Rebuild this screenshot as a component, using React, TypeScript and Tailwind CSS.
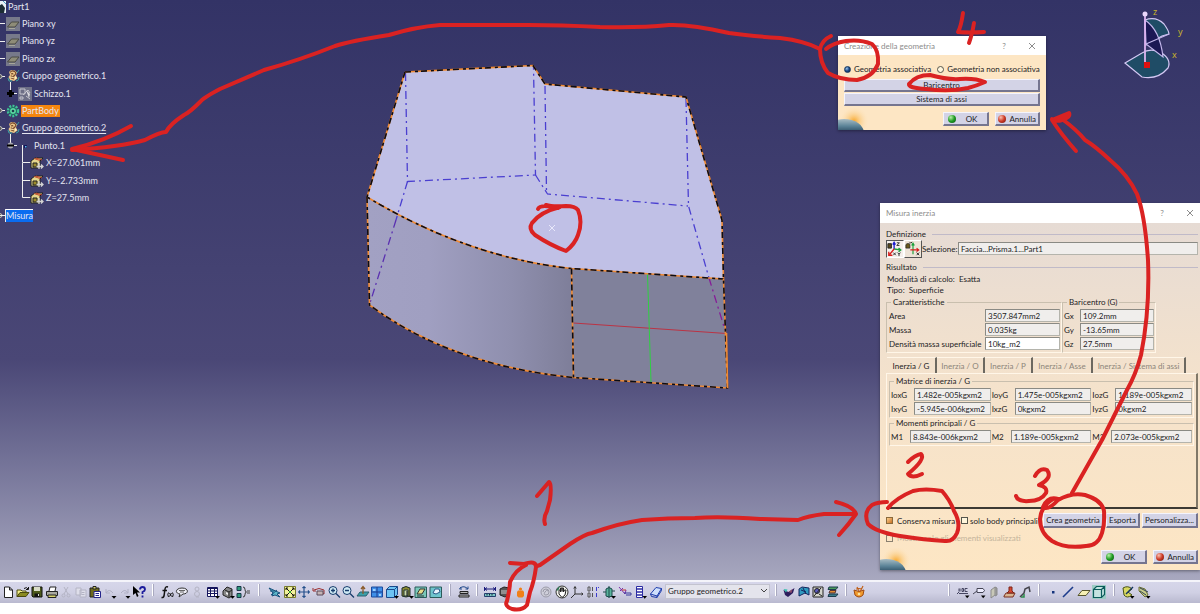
import React, { useId, useState } from "react";

/* ---------- toolbar glyphs, all on a 14 × 14 grid ---------- */

const glyphs: Record<string, React.ReactNode> = {
  new: <path d="M3.500 2h5l3 3v7.500h-8zM8.500 2v3h3" fill="#fff" stroke="#222" />,
  open: (
    <g stroke="#4a4a10">
      <path d="M1 11.500V5h4l1 1h4v2" fill="#f4f08a" />
      <path d="M1 11.500l3-4h9l-3 4z" fill="#8a8a20" />
      <path d="M8 3.500q3-2 4 .5m.5-2v2.500h-2.500" fill="none" stroke="#111" />
    </g>
  ),
  save: (
    <g>
      <path d="M2 2h10v10H3l-1-1z" fill="#4d5a1c" stroke="#111" />
      <path d="M4 2h6v4H4z" fill="#d9dcc8" />
      <path d="M4.500 8.500h5V12h-5z" fill="#111" />
      <path d="M8 9h1v2H8z" fill="#ddd" />
    </g>
  ),
  print: (
    <g stroke="#222">
      <path d="M4 6l1-4h6l-1 4" fill="#fff" />
      <path d="M1.500 6.500h11v4h-11z" fill="#a9a9a0" />
      <path d="M3 10h8v2.500H3z" fill="#d8d36b" />
    </g>
  ),
  cut: (
    <g stroke="#b4b4c4" fill="none">
      <path d="M5 2l4 7M9 2L5 9" />
      <circle cx="4.500" cy="10.500" r="1.500" />
      <circle cx="9.500" cy="10.500" r="1.500" />
    </g>
  ),
  copy: (
    <g stroke="#b4b4c4" fill="#dedeea">
      <path d="M2 3h5v7H2zM6 5h6v7H6z" />
      <path d="M7.500 7.500h3M7.500 9.500h3" />
    </g>
  ),
  paste: (
    <g>
      <path d="M2 3h9v9H2z" fill="#6d6a1c" stroke="#222" />
      <path d="M5 1.500h3v2.500H5z" fill="#d8d36b" stroke="#222" />
      <path d="M6 6.500h6.500v6H6z" fill="#fff" stroke="#24248a" />
      <path d="M7.500 8.500h3.500M7.500 10.500h3.500" stroke="#24248a" />
    </g>
  ),
  undo: (
    <g>
      <path d="M3 8q3-5 7 0M3 4v4h4" fill="none" stroke="#b0b0c4" />
      <path d="M8.500 11h5L11 13.800z" fill="#000" />
    </g>
  ),
  redo: (
    <g>
      <path d="M11 8q-3-5-7 0M11 4v4H7" fill="none" stroke="#b0b0c4" />
      <path d="M8.500 11h5L11 13.800z" fill="#000" />
    </g>
  ),
  help: (
    <g>
      <path d="M1 1v9l2.500-2 1.500 4 1.500-1-1.500-3.500H8z" fill="#000" />
      <path d="M8 4.500Q8 2 10.500 2T13 4.500Q13 6 10.500 7v2M10.500 10.500v2" fill="none" stroke="#1c1c9c" strokeWidth="1.800" />
    </g>
  ),
  formula: (
    <g fill="none" stroke="#111">
      <path d="M8 2Q5.500 1 5 4L4 11q-.5 2-2.500 1.500M2.500 5.500h4.500" strokeWidth="1.500" />
      <path d="M8.500 7.500q-1.500 2 0 4.500M9.500 8l2 3.500m0-3.500l-2 3.500M12.500 7.500q1.500 2 0 4.500" />
    </g>
  ),
  comment: (
    <g>
      <path d="M7 3c7 0 7 6 1 6l-4 3 1-3C-1 8 1 3 7 3z" fill="#ececf4" stroke="#333" />
      <path d="M4 5.500h6M5 7h4" stroke="#666" />
    </g>
  ),
  lock: (
    <g stroke="#b4b4c4" fill="none">
      <circle cx="7" cy="4" r="2" />
      <circle cx="7" cy="9" r="2.500" />
      <path d="M6 12h3" />
    </g>
  ),
  table: (
    <g>
      <path d="M1.500 2.500h10v9h-10z" fill="#fff" stroke="#14145c" />
      <path d="M1 3.500h11M2 6h9M2 8.500h9M4.500 4v7M8.500 4v7" stroke="#14145c" />
      <path d="M9 11h5l-2.500 2.800z" fill="#000" />
    </g>
  ),
  catalog: (
    <g>
      <path d="M2 6l4-4 5 2v7l-3 2-6-3z" fill="#888" stroke="#222" />
      <path d="M4 5l4 2v5M8 7l3-2" stroke="#222" fill="none" />
      <path d="M5 7l2 1v2l-2-1z" fill="#eee" />
      <path d="M9 11h5l-2.500 2.800z" fill="#000" />
    </g>
  ),
  tree: (
    <g>
      <path d="M1 1.500h4v4H1zM1 8.500h4v4H1z" fill="#2f9a7a" stroke="#17364a" />
      <path d="M7 2q2 0 2 2.500T10.500 7Q9 7 9 9.500T7 12" fill="none" stroke="#333" />
      <path d="M11 6h3M11 8h3" stroke="#444" />
    </g>
  ),
  fly: (
    <g stroke="#17507c">
      <path d="M1 3l11 5-3 1 3 3-5-2-3 1 1-3z" fill="#5cb6c8" />
      <path d="M3 10l6-5M2 6h4" />
    </g>
  ),
  fit: (
    <g>
      <path d="M1.500 1.500h11v11h-11z" fill="#f3f29a" stroke="#777a2a" />
      <path d="M3 3l3 3M11 3L8 6M3 11l3-3M11 11L8 8M3 5V3h2M9 3h2v2M3 9v2h2M9 11h2V9" stroke="#111" fill="none" />
      <path d="M6 6h2v2H6z" fill="#2fa02f" />
    </g>
  ),
  pan: (
    <g stroke="#26508c" fill="#26508c">
      <path d="M7 2v10M2 7h10" strokeWidth="1.200" />
      <path d="M7 1l2 2H5zM7 13l2-2H5zM1 7l2-2v4zM13 7l-2-2v4z" strokeWidth=".3" />
    </g>
  ),
  rotate: (
    <g fill="none" stroke="#9a2f2f">
      <path d="M2 5q5-3 10 0v4q-2-2-5-1" />
      <path d="M1 3v3h3" />
      <path d="M5 6h6v4H5z" fill="#c4b4b4" stroke="#5a4a5a" />
    </g>
  ),
  zoomIn: (
    <g>
      <circle cx="6" cy="5.500" r="4" fill="#cfeaf4" stroke="#173c6c" />
      <path d="M4 5.500h4M6 3.500v4M9 8.500l4 4" stroke="#173c6c" strokeWidth="1.300" />
    </g>
  ),
  zoomOut: (
    <g>
      <circle cx="6" cy="5.500" r="4" fill="#cfeaf4" stroke="#173c6c" />
      <path d="M4 5.500h4M9 8.500l4 4" stroke="#173c6c" strokeWidth="1.300" />
    </g>
  ),
  normal: (
    <g>
      <path d="M1 11l3-4h9l-3 4z" fill="#3ca0a8" stroke="#2b6070" />
      <path d="M7 9V2M5 4l2-2.500L9 4" stroke="#8a5a2a" fill="none" strokeWidth="1.300" />
    </g>
  ),
  multi: (
    <g>
      <path d="M1.500 2h11v10h-11z" fill="#3f8fe8" stroke="#1b4a9c" />
      <path d="M7 2v10M2 7h10" stroke="#1b3a8c" />
      <path d="M3 4h2.500v2H3zM9 9h2v2H9z" fill="#9ed0ff" />
    </g>
  ),
  iso: (
    <g>
      <path d="M1.500 4.500l3-3h8v8l-3 3h-8z" fill="#6ec4f4" stroke="#1a4a8c" />
      <path d="M1.500 4.500h8v8M9.500 4.500l3-3" fill="none" stroke="#1a4a8c" />
      <path d="M9 11h5l-2.500 2.800z" fill="#000" />
    </g>
  ),
  shade: (
    <g>
      <path d="M2 3q4-3 8 0v8q-4 2-8 0z" fill="#8a8a30" stroke="#1c2c2c" />
      <path d="M4 5h4v6H4z" fill="#c8d8a8" stroke="#233" />
      <path d="M7 6v5" stroke="#111" />
      <path d="M9 11h5l-2.500 2.800z" fill="#000" />
    </g>
  ),
  hideShow: (
    <g>
      <path d="M1 2h11.500v10.500H1z" fill="#79c8b8" stroke="#2a5a5a" />
      <path d="M3 9l3-5h5l-3 5z" fill="#e4dc8a" stroke="#333" />
      <path d="M3 11h7" stroke="#333" />
    </g>
  ),
  swap: (
    <g>
      <path d="M1 2h11.500v10.500H1z" fill="#6ec4cc" stroke="#2a5a5a" />
      <path d="M4 8l2-4h4l1 3-4 2z" fill="#e8f4fc" stroke="#2a5a8a" />
    </g>
  ),
  apply: (
    <g stroke="#222">
      <path d="M3 6.500h8v2H3zM2 10h10v2H2z" fill="#bbb" />
      <path d="M3 3q4-3 8 1M11 1.500V4H8.500M4 2l-1.500 2H5" fill="none" stroke="#224a8c" />
    </g>
  ),
  measure: (
    <g>
      <path d="M1.500 2v4M12.500 2v4M2 4h10M4 2.500L2 4l2 1.500M10 2.500L12 4l-2 1.500" fill="none" stroke="#1c1c7c" />
      <path d="M1.500 8.500h11v3h-11z" fill="#7cc8c8" stroke="#24406c" />
      <path d="M4 9v1.500M6.500 9v1.500M9 9v1.500" stroke="#123" />
    </g>
  ),
  item: (
    <g stroke="#222">
      <path d="M2 4l4-2 5 1v7l-4 2-5-2z" fill="#555" />
      <path d="M3 6h7M3 8h7" stroke="#ccc" />
    </g>
  ),
  inertia: (
    <g>
      <path d="M5 5.500h5l1 1.500v4l-1.500 1.500h-4L4 11V7z" fill="#f08018" />
      <circle cx="7.500" cy="4" r="1.600" fill="#f08018" />
    </g>
  ),
  update: (
    <g fill="none" stroke="#9a9aa8">
      <circle cx="7" cy="7" r="5" fill="#cfcfda" />
      <path d="M4 7q0-3 3-3t3 3-3 3-1-3 3-1" />
    </g>
  ),
  hand: (
    <g>
      <circle cx="7" cy="7" r="6" fill="#f4f4ee" stroke="#333" />
      <path d="M4 9V5h1.500v2-4H7v3.500V3h1.500v4l1-2h1.500l-1 5-3 2.500z" fill="#fff" stroke="#222" />
      <path d="M1.500 6Q2 2 5 1.500L3.500 5z" fill="#2f7a5a" />
    </g>
  ),
  axis: (
    <g fill="none" stroke="#333">
      <path d="M5 2v7h8M5 9l-4 4M3.800 3.500L5 1.500l1.200 2M11.500 7.800L13 9l-1.500 1.200" />
    </g>
  ),
  binary: (
    <g fill="none" stroke="#555">
      <path d="M2 2h2v4H2zM2 8h2v4H2zM6.500 2v4M6.500 8v4" />
      <path d="M10.500 2v4M10.500 8v4M12.500 2v1" stroke="#3a3acc" />
    </g>
  ),
  body: (
    <g>
      <path d="M4 4q3-3 6 0v7q-3 2-6 0z" fill="#58b49c" stroke="#1c4a4a" />
      <path d="M1 7h3M10 6h3M7 1v12" stroke="#1c4a4a" />
      <path d="M9 11h5l-2.500 2.800z" fill="#000" />
    </g>
  ),
  relation: (
    <g fill="none">
      <path d="M1 2l6 7 1-4M2 6l3-3" stroke="#7a2fa8" />
      <path d="M6 8h7v2H8" stroke="#3a3a9c" />
      <path d="M4 5h4" stroke="#c03030" />
    </g>
  ),
  stack: (
    <g>
      <path d="M3.500 1.500h6v11h-6z" fill="#fff" stroke="#2c2ca4" />
      <path d="M4 4h5M4 7h5M4 10h5" stroke="#2c2ca4" strokeWidth="1.500" />
      <path d="M9.500 11h4.500l-2.300 2.800z" fill="#000" />
    </g>
  ),
  eraser: (
    <g stroke="#1c3cac">
      <path d="M1.500 9L7 2.500l5.500 1L8 11z" fill="#cfe0fc" />
      <path d="M1.500 9l1 2.500 5.500 1 4.500-7v-2M8 11v1.500" fill="none" />
    </g>
  ),
  render1: (
    <g>
      <path d="M1.500 5l5 2 6-4-1.500 5-5 4-3-2z" fill="#2c1c5c" />
      <path d="M1.500 4l4 .5L4 7.500z" fill="#3cc0b0" />
      <path d="M6.500 7l4-3-1 4z" fill="#8a4a6a" />
    </g>
  ),
  render2: (
    <g>
      <path d="M2 4l3-2 7 1v7l-4-2-6 3z" fill="#2f9ac0" stroke="#14245c" />
      <path d="M4 5l5 2M6 3l3 6" stroke="#14245c" />
    </g>
  ),
  render3: (
    <g>
      <path d="M2 2h10v10H2z" fill="#d4d4cc" stroke="#222" />
      <circle cx="6" cy="6" r="2.500" fill="#5a5ac0" stroke="#222" />
      <path d="M3 11l7-8M8 9l3 2" stroke="#222" />
    </g>
  ),
  render4: (
    <g>
      <path d="M3 2h9l-2 2.500H2z" fill="#4c9c5c" stroke="#1c3c4c" />
      <path d="M4 5.500h6L9 8H3z" fill="#e08a30" stroke="#533" />
      <path d="M3 9h9l-2 2.500H2z" fill="#3c7c8c" stroke="#1c3c4c" />
    </g>
  ),
  palette: (
    <g>
      <path d="M2 5q5 3 10 0l-1 5q-4 4-8 0z" fill="#f09a2c" stroke="#a04a10" />
      <path d="M5 2l2 4M11 1L8 7M4 4q3-1 6 0" stroke="#c06018" fill="none" strokeWidth="1.200" />
      <circle cx="7" cy="9" r="1.300" fill="#fbe2a0" />
    </g>
  ),
  textNote: (
    <g>
      <path d="M3 3.500v3m1-3v3M6 3.500h1.500v3H6zM9 3.500h2.500M9 6.500h2.500M9 3.500v3M3 8.500h9M1 9l2-2" fill="none" stroke="#444460" />
      <path d="M9 10.500h4.500l-2.300 2.800z" fill="#000" />
    </g>
  ),
  flag: (
    <g>
      <path d="M5 3.500h6l1.500 2-1.500 2H5z" fill="#eef" stroke="#445" />
      <path d="M5 6l-4 3" stroke="#445" />
      <path d="M9 10.500h4.500l-2.300 2.800z" fill="#000" />
    </g>
  ),
  plate: (
    <g>
      <path d="M4 5l4-3v8l-4 3z" fill="#c8c8b8" stroke="#8a8a8a" />
      <path d="M8 2l2 1v7l-2 1" fill="#999" stroke="#8a8a8a" />
    </g>
  ),
  stamp: (
    <g>
      <path d="M1 11l2-3h9l-2 4H1z" fill="#d8b490" stroke="#7a3020" />
      <path d="M6 2h3v4l2 2H4l2-2z" fill="#d84830" stroke="#7a2418" />
    </g>
  ),
  robot: (
    <g fill="none" stroke="#44444c" strokeWidth="1.500">
      <path d="M2 12l4-4 1-4 4-2 1 5" />
      <path d="M3 12h3V9" stroke="#2c8c4c" />
    </g>
  ),
  point: <path d="M6 6h2.500v2.500H6z" fill="#14347c" />,
  line: <path d="M2 12L12 2" stroke="#1c3c8c" strokeWidth="1.600" />,
  plane: <path d="M1 10.500l4-5h8l-4 5z" fill="#f6f0b4" stroke="#55552c" />,
  cube: (
    <g>
      <path d="M0 0h14v14H0z" fill="#9cccc4" />
      <path d="M1.500 4.500l3-3h8v8l-3 3h-8zM1.500 4.500h8v8M9.500 4.500l3-3" fill="#c4e4e0" stroke="#0c5c5c" strokeWidth="1.200" />
    </g>
  ),
  sketch: (
    <g>
      <path d="M2 3q5-3 9 1l-4 3 4 3q-5 4-8 0z" fill="#d8d860" stroke="#445014" />
      <path d="M5 9l7-7" stroke="#14345c" strokeWidth="1.500" />
      <path d="M9 11h4.500l-2.300 2.800z" fill="#000" />
    </g>
  ),
  sketch2: (
    <g>
      <path d="M2 2l6 2 3 6-3 2-6-6z" fill="#c8cc8a" stroke="#6a7034" />
      <path d="M3 3l8 4M3 6l6 4" stroke="#345" />
      <path d="M9 11h4.500l-2.300 2.800z" fill="#000" />
    </g>
  ),
};

function Tool({ name, label }: { name: string; label: string }) {
  return (
    <button type="button" aria-label={label} className="size-3.5 shrink-0">
      <svg viewBox="0 0 14 14" className="size-3.5">
        {glyphs[name]}
      </svg>
    </button>
  );
}

function Grip() {
  return <span className="mb-1 h-3 w-0.5 shrink-0 border-l border-white bg-[#a9a9bf]" />;
}

function Group({ tools, className }: { tools: [string, string][]; className: string }) {
  return (
    <div className={"flex shrink-0 items-center justify-between " + className}>
      {tools.map(([name, label]) => (
        <Tool key={name} name={name} label={label} />
      ))}
    </div>
  );
}

function Toolbar() {
  return (
    <footer className="flex h-[23px] items-center overflow-hidden border-t-2 border-[#f4f4fa] bg-linear-to-b from-[#d6d6ea] via-[#d0d0e4] to-[#b9b9cf] pb-0.5 pl-px">
      <Group
        className="w-[145px]"
        tools={[
          ["new", "Nuovo"],
          ["open", "Apri"],
          ["save", "Salva"],
          ["print", "Stampa"],
          ["cut", "Taglia"],
          ["copy", "Copia"],
          ["paste", "Incolla"],
          ["undo", "Annulla azione"],
          ["redo", "Ripeti"],
          ["help", "Guida"],
        ]}
      />
      <div className="flex w-[14px] shrink-0 justify-center"><Grip /></div>
      <Group
        className="w-[90px]"
        tools={[
          ["formula", "Formula"],
          ["comment", "Commento"],
          ["lock", "Blocca"],
          ["table", "Tabella"],
          ["catalog", "Catalogo"],
          ["tree", "Struttura"],
        ]}
      />
      <div className="flex w-[18px] shrink-0 justify-center"><Grip /></div>
      <Group
        className="w-[175px]"
        tools={[
          ["fly", "Vola"],
          ["fit", "Adatta tutto"],
          ["pan", "Sposta"],
          ["rotate", "Ruota"],
          ["zoomIn", "Ingrandisci"],
          ["zoomOut", "Riduci"],
          ["normal", "Vista normale"],
          ["multi", "Viste multiple"],
          ["iso", "Isometrica"],
          ["shade", "Ombreggiatura"],
          ["hideShow", "Nascondi/Mostra"],
          ["swap", "Scambia spazio"],
        ]}
      />
      <div className="flex w-[14px] shrink-0 justify-center"><Grip /></div>
      <Tool name="apply" label="Applica materiale" />
      <div className="flex w-[12px] shrink-0 justify-center"><Grip /></div>
      <Group
        className="w-11"
        tools={[
          ["measure", "Misura tra"],
          ["item", "Misura elemento"],
          ["inertia", "Misura inerzia"],
        ]}
      />
      <Group
        className="ml-3 w-[124px]"
        tools={[
          ["update", "Aggiorna"],
          ["hand", "Aggiornamento manuale"],
          ["axis", "Sistema di assi"],
          ["binary", "Dimensioni medie"],
          ["body", "Corpo"],
          ["relation", "Relazioni"],
          ["stack", "Selezione"],
          ["eraser", "Crea riferimento"],
        ]}
      />
      <div className="relative ml-0.5 w-[105px] shrink-0">
        <select
          aria-label="Oggetto di lavoro"
          className="block h-[15px] w-full appearance-none border border-[#c3c3cf] bg-[#e4e4ec] pl-0.5 font-['Lato',sans-serif] text-[8px] leading-[13px] text-[#1c1c24]"
        >
          <option>Gruppo geometrico.2</option>
        </select>
        <svg viewBox="0 0 8 6" className="pointer-events-none absolute top-1 right-0.5 h-1.5 w-2">
          <path d="M1 1l3 3 3-3" fill="none" stroke="#444" />
        </svg>
      </div>
      <div className="flex w-[12px] shrink-0 justify-center"><Grip /></div>
      <Group
        className="w-[58px]"
        tools={[
          ["render1", "Sformo"],
          ["render2", "Curvatura"],
          ["render3", "Analisi"],
          ["render4", "Strati"],
        ]}
      />
      <div className="flex w-[12px] shrink-0 justify-center"><Grip /></div>
      <Tool name="palette" label="Materiale" />
      <div className="ml-[82px] flex w-[8px] shrink-0"><Grip /></div>
      <Group
        className="w-[76px]"
        tools={[
          ["textNote", "Testo"],
          ["flag", "Nota"],
          ["plate", "Piastra"],
          ["stamp", "Timbro"],
          ["robot", "Vincolo"],
        ]}
      />
      <div className="flex w-[14px] shrink-0 justify-center"><Grip /></div>
      <Group
        className="w-[60px]"
        tools={[
          ["point", "Punto"],
          ["line", "Linea"],
          ["plane", "Piano"],
          ["cube", "Solido"],
        ]}
      />
      <div className="flex w-[15px] shrink-0 justify-center"><Grip /></div>
      <Group
        className="w-[30px]"
        tools={[
          ["sketch", "Schizzo"],
          ["sketch2", "Schizzo posizionato"],
        ]}
      />
    </footer>
  );
}

/* ---------- specification tree ---------- */

const planeIcon = (
  <g>
    <path d="M0 0h14v14H0z" fill="#77798a" />
    <path d="M1.500 10l4-5h7.500l-4 5z" fill="#8e8c78" stroke="#4a4a44" />
    <path d="M3 11.500h6" stroke="#a6a69a" />
  </g>
);
const setIcon = (
  <g>
    <path d="M3 3l2-2 4 .5 2 2-1 3 1.500 3-1.500 1L8 12l-4-1-1.500-3L4 6z" fill="#ecc88a" />
    <path d="M4 3.500q2-2.500 4.500-1t0 4-3.500 0M5 5q2-1 2 .5M5 9l3 1" fill="none" stroke="#7a4a2c" strokeWidth="1.100" />
    <path d="M9 7l2 2-2 1zM5 7.500l2 .5-1 1.500z" fill="#fff4c8" />
    <path d="M11 4l2-3M10 12q3 0 3-4M2 9l1 3h3" stroke="#3ca0a0" fill="none" />
  </g>
);
const sketchIcon = (
  <g>
    <path d="M0 0h14v14H0z" fill="#6d6f86" />
    <path d="M2 2h5v5H2zM2 10h3v2H2zM8 9l4 3M5 8l5-5 2 3" fill="none" stroke="#c4c4cc" />
    <path d="M8 3l3 8 1-4z" fill="#dcdce0" />
  </g>
);
const gearIcon = (
  <g>
    <circle cx="7" cy="7" r="5" fill="none" stroke="#3fc496" strokeWidth="2.500" strokeDasharray="2 1.200" />
    <circle cx="7" cy="7" r="3.500" fill="#5fd8a4" stroke="#14745c" />
    <circle cx="7" cy="7" r="1.300" fill="#1c3c4c" />
  </g>
);
const paramIcon = (
  <g>
    <path d="M1 5l4-3h8l-3 3v7H1z" fill="#e4d68c" stroke="#222" />
    <path d="M4 2.500l6 2M6 2l6 2" stroke="#c04a2c" />
    <path d="M3 7h4v4H3z" fill="#9c8c2c" stroke="#222" />
    <path d="M9 7v6M6.500 10.500H13M11 8.500l2 2-2 2" stroke="#d4d4d4" fill="none" strokeWidth="1.300" />
  </g>
);

type Node = { text: string; level: 0 | 1 | 2 | 3; icon?: React.ReactNode; mark?: "open" | "closed" | "node"; style?: string };

const nodes: Node[] = [
  {
    text: "Part1",
    level: 0,
    icon: (
      <g>
        <path d="M5 1h9v12H7z" fill="#e8f0f4" />
        <path d="M5 7l5-3 3 4-1 5H7z" fill="#1c2c34" />
        <path d="M11 1l3 3" stroke="#4a9cc4" />
      </g>
    ),
    style: "ml-0.5",
  },
  { text: "Piano xy", level: 1, icon: planeIcon, style: "ml-0.5" },
  { text: "Piano yz", level: 1, icon: planeIcon, style: "ml-0.5" },
  { text: "Piano zx", level: 1, icon: planeIcon, style: "ml-0.5" },
  { text: "Gruppo geometrico.1", level: 1, icon: setIcon, mark: "node", style: "ml-0.5" },
  { text: "Schizzo.1", level: 2, icon: sketchIcon, mark: "closed", style: "ml-0.5" },
  { text: "PartBody", level: 1, icon: gearIcon, mark: "node", style: "ml-px bg-[#f5860f] px-px" },
  { text: "Gruppo geometrico.2", level: 1, icon: setIcon, mark: "node", style: "ml-0.5 underline underline-offset-2" },
  {
    text: "Punto.1",
    level: 2,
    mark: "open",
    icon: (
      <g>
        <path d="M6 6h3v3H6z" fill="#14145c" />
        <path d="M7 7h1.500v1.500H7z" fill="#5cc0e4" />
      </g>
    ),
    style: "ml-0.5",
  },
  { text: "X=27.061mm", level: 3, icon: paramIcon, style: "ml-0.5" },
  { text: "Y=-2.733mm", level: 3, icon: paramIcon, style: "ml-0.5" },
  { text: "Z=27.5mm", level: 3, icon: paramIcon, style: "ml-0.5" },
  { text: "Misura", level: 0, mark: "node", style: "border-t border-white bg-[#0a6cf0]" },
];

const indents = ["w-1.5", "w-5", "w-8", "w-11"];

function TreeRow({ node }: { node: Node }) {
  const { level, mark } = node;
  return (
    <li className="flex items-center">
      <span className={"relative flex h-full shrink-0 items-center justify-end " + indents[level]}>
        <svg viewBox="0 0 30 17" className="absolute top-0 left-0 h-[17px] w-[30px] overflow-visible" fill="none" stroke="#eee" strokeWidth="1">
          {level === 1 && <path d="M0 8.500h5" />}
          {level === 2 && <path d="M10.500 -3V8.500M13 8.500h4" />}
          {level === 3 && <path d="M22.500 -9V8.500h8" />}
          {mark === "node" && <circle cx="0" cy="8.500" r="2" stroke="#bbb" fill="#555" />}
          {mark === "closed" && <path d="M10.500 5v7M7 8.500h7" stroke="#000" strokeWidth="3" />}
          {mark === "open" && (
            <g>
              <circle cx="10.500" cy="8.500" r="3" fill="#a8a8b0" stroke="none" />
              <path d="M7 8.500h7" stroke="#000" strokeWidth="2" />
            </g>
          )}
          {level === 0 && mark === "node" && <path d="M0 8.500h5M5.500 2v13" />}
        </svg>
        {node.icon && (
          <svg viewBox="0 0 14 14" className="relative size-3.5 shrink-0">
            {node.icon}
          </svg>
        )}
      </span>
      <span className={"leading-3 " + node.style}>
        <a href="#" className="text-[#e4e4f0]">{node.text}</a>
      </span>
    </li>
  );
}

function SpecificationTree() {
  return (
    <nav aria-label="Albero delle specifiche" className="relative overflow-hidden">
      <ul className="-mt-0.5 grid h-[226px] auto-rows-fr text-[9px]">
        {nodes.map((n) => (
          <TreeRow key={n.text} node={n} />
        ))}
      </ul>
    </nav>
  );
}

/* ---------- 3D part ---------- */

function Part() {
  const edges = [
    "M405 72L533 65.500L545 84L686 97L722 220L723.500 279",
    "M405 72L367 197C440 241 510 262 571.500 268.500L723.500 279",
    "M367 197L369.500 305C430 350 500 370 573 377.500L727.500 388L723.500 279",
    "M571.500 268.500L573.500 377.500",
  ];
  return (
    <svg viewBox="0 0 1200 580" className="pointer-events-none absolute top-0 left-0 h-[580px] w-[1200px]" fill="none">
      <defs>
        <linearGradient id="curved" x1="367" x2="573" y1="0" y2="0" gradientUnits="userSpaceOnUse">
          <stop offset="0" stopColor="#a2a1c3" />
          <stop offset=".3" stopColor="#a09fc1" />
          <stop offset=".7" stopColor="#8f8fae" />
          <stop offset="1" stopColor="#7e7e99" />
        </linearGradient>
      </defs>
      <path d="M405 72L533 65.500L545 84L686 97L722 220L723.500 279L571.500 268.500C510 262 440 241 367 197z" fill="#c0c0e6" />
      <path d="M367 197C440 241 510 262 571.500 268.500L573.500 377.500C500 370 430 350 369.500 305z" fill="url(#curved)" />
      <path d="M571.500 268.500L723.500 279L727.500 388L573.500 377.500z" fill="#80819b" />
      <g stroke="#4a3fd0" strokeWidth="1.300" strokeDasharray="8 4 2 4">
        <path d="M405.500 73L407.500 181.500L535.500 175L533.500 67" />
        <path d="M545 86L546.500 192M535.500 175L547.500 194L688 206M686 99L688.500 206L709 278" />
        <path d="M407.500 181.500L396 220" />
      </g>
      <g strokeWidth="1.300" strokeDasharray="8 4 2 4">
        <path d="M396 220L370 303" stroke="#5a30b0" />
        <path d="M709 278L725 330" stroke="#861c98" />
      </g>
      <path d="M573.500 323L726.500 333.500" stroke="#bb3344" />
      <path d="M647.500 274L651 382" stroke="#2fd042" />
      {edges.map((d) => (
        <g key={d} strokeWidth="1.600">
          <path d={d} stroke="#f08a34" />
          <path d={d} stroke="#0c0c14" strokeDasharray="6 4 3 3" />
        </g>
      ))}
      <path d="M726.500 333L727.500 388" stroke="#f08a34" strokeWidth="1.600" />
      <path d="M549 225l6 6m0-6l-6 6" stroke="#e8e8fa" />
    </svg>
  );
}

function Compass() {
  return (
    <svg viewBox="0 0 70 80" className="absolute top-1 right-[10px] h-20 w-[70px]" fill="none">
      <path d="M5 59L22 49Q30 44 40 48Q52 55 48 64Q38 76 22 73z" fill="#1f4c66" stroke="#d4c8f4" strokeWidth="1.200" />
      <path d="M25 16Q36 12 44 20Q49 27 49 30L42 32L26 41z" fill="#1f4c66" stroke="#d4c8f4" strokeWidth="1.200" />
      <path d="M25 16Q40 26 43 53L26 40z" fill="#1c1854" stroke="#c4b8ec" strokeWidth="1.200" />
      <path d="M26 40L49 30" stroke="#c4b8ec" strokeWidth="1.200" />
      <path d="M25 10V60" stroke="#dcb4f0" strokeWidth="1.800" />
      <circle cx="25" cy="10" r="2.500" fill="#ead8fc" />
      <path d="M24 58h6v6h-6z" fill="#e01010" />
      <g fill="#c8b42c" fontFamily="Noto Sans, sans-serif" fontSize="9">
        <text x="33" y="11">z</text>
        <text x="58" y="31">y</text>
        <text x="52" y="54">x</text>
      </g>
    </svg>
  );
}

/* ---------- dialogs ---------- */

function TitleBar({ title, className }: { title: string; className: string }) {
  return (
    <header className={"flex items-center bg-white pl-1.5 text-[#8c8c8c] " + className}>
      <h2 className="flex-1">{title}</h2>
      <button type="button" aria-label="Guida" className="w-6">?</button>
      <button type="button" aria-label="Chiudi" className="ml-1.5 flex w-5 justify-center">
        <svg viewBox="0 0 8 8" className="size-2">
          <path d="M1 1l6 6M7 1L1 7" stroke="#8c8c8c" fill="none" />
        </svg>
      </button>
    </header>
  );
}

const raised =
  "border-t border-l border-r-2 border-b-2 border-t-[#f4f4fc] border-l-[#f4f4fc] border-r-[#75758f] border-b-[#75758f] bg-[#d3d3e6] text-[#1c1c24]";

function ActionButtons() {
  return (
    <div className="flex gap-1.5">
      <button type="button" className={"flex h-3.5 w-[46px] items-center pl-1 leading-none " + raised}>
        <span className="size-2 rounded-full bg-radial-[at_35%_30%] from-[#b8f0a8] via-[#1f9c24] to-[#0c4c10]" />
        <span className="flex-1 text-center">OK</span>
      </button>
      <button type="button" className={"flex h-3.5 w-[45px] items-center justify-between px-0.5 leading-none " + raised}>
        <span className="size-2 rounded-full bg-radial-[at_35%_30%] from-[#fbc0b0] via-[#cc3a26] to-[#6c140c]" />
        <span>Annulla</span>
      </button>
    </div>
  );
}

function Planet() {
  return (
    <svg viewBox="0 0 32 22" className="pointer-events-none absolute bottom-0 left-0 h-[22px] w-8">
      <defs>
        <radialGradient id="glow" cx=".5" cy=".5" r=".5">
          <stop offset="0" stopColor="#f8a82c" />
          <stop offset=".4" stopColor="#fac878" stopOpacity=".7" />
          <stop offset="1" stopColor="#fde6c4" stopOpacity="0" />
        </radialGradient>
        <linearGradient id="globe" x1="0" x2="0" y1="0" y2="1">
          <stop offset="0" stopColor="#a8bcc4" />
          <stop offset=".25" stopColor="#5c8498" />
          <stop offset=".5" stopColor="#24445a" />
          <stop offset="1" stopColor="#14283a" />
        </linearGradient>
      </defs>
      <circle cx="16" cy="13" r="15" fill="url(#glow)" />
      <ellipse cx="6" cy="25" rx="20" ry="14" fill="url(#globe)" />
    </svg>
  );
}

function GeometryDialog() {
  const [kind, setKind] = useState("associativa");
  return (
    <section
      aria-label="Creazione della geometria"
      className="absolute top-9 right-[154px] w-[208px] text-[8px] leading-[10px] text-[#1c1c24] shadow-[0_1px_3px_#00000066]"
    >
      <TitleBar title="Creazione della geometria" className="h-[19px] pr-1" />
      <div className="relative bg-[#fde6c4] px-1.5 pt-2 pb-1">
        <Planet />
        <div className="flex h-[12px] items-center gap-1.5">
          {["associativa", "non associativa"].map((k) => (
            <label key={k} className="flex items-center gap-[3px] whitespace-nowrap">
              <input
                type="radio"
                name="kind"
                checked={kind === k}
                onChange={() => setKind(k)}
                className="size-[7px] shrink-0 appearance-none rounded-full border border-[#55554c] bg-[#fff6dc] checked:border-[#14345c] checked:bg-radial-[at_35%_30%] checked:from-[#9cc4e8] checked:via-[#1c4c8c] checked:to-[#0c1c3c]"
              />
              Geometria {k}
            </label>
          ))}
        </div>
        <div className="mt-1 flex flex-col gap-px">
          <button type="button" className={"h-[13px] leading-none " + raised}>Baricentro</button>
          <button type="button" className={"h-[13px] leading-none " + raised}>Sistema di assi</button>
        </div>
        <div className="mt-1.5 flex justify-end">
          <ActionButtons />
        </div>
      </div>
    </section>
  );
}

function Field({
  label,
  value,
  labelClass,
  white,
}: {
  label: string;
  value: string;
  labelClass: string;
  white?: boolean;
}) {
  const id = useId();
  return (
    <div className="flex min-w-0 flex-1 items-center">
      <label htmlFor={id} className={"shrink-0 whitespace-nowrap " + labelClass}>{label}</label>
      <input
        id={id}
        readOnly={!white}
        defaultValue={value}
        className={
          "h-[13px] w-full min-w-0 border border-t-[#8a8a84] border-r-[#b4b4ac] border-b-[#b4b4ac] border-l-[#8a8a84] px-0.5 leading-[11px] " +
          (white ? "bg-white" : "bg-[#f0eeec]")
        }
      />
    </div>
  );
}

const frame = "min-w-0 border border-[#c9bfae] border-r-[#fff6e8] border-b-[#fff6e8]";

function Heading({ children }: { children: React.ReactNode }) {
  return (
    <h3 className="flex items-center gap-1.5 leading-[10px] after:h-px after:flex-1 after:bg-[#c0bac8]">{children}</h3>
  );
}

const tabs = [
  ["Inerzia / G", "w-[50px]"],
  ["Inerzia / O", "w-12"],
  ["Inerzia / P", "w-12"],
  ["Inerzia / Asse", "w-[60px]"],
  ["Inerzia / Sistema di assi", "w-[93px]"],
];

function InertiaDialog() {
  const [tab, setTab] = useState(0);
  return (
    <section
      aria-label="Misura inerzia"
      className="absolute top-[203px] right-0 w-80 bg-[#fde6c4] text-[8px] text-[#1c1c24] shadow-[0_1px_3px_#00000066]"
    >
      <TitleBar title="Misura inerzia" className="h-5" />
      <div className="relative bg-linear-to-b from-[#e6dbd4] via-[#f4e2cc] via-45% to-[#fde6c4] pt-1.5 pr-0.5 pb-1.5 pl-1.5">
        <Planet />
        <Heading>Definizione</Heading>
        <div className="flex h-[19px] items-center">
          <button type="button" aria-label="Misura inerzia 3D" className="size-[18px] border border-t-[#555] border-l-[#555] border-r-white border-b-white bg-[#f6f0ec]">
            <svg viewBox="0 0 18 18" fill="none">
              <path d="M1 3h4v5H1z" fill="#5a4a1c" stroke="#222" />
              <path d="M8 9V2M6.500 4L8 1.500 9.500 4" stroke="#1c1cd0" strokeWidth="1.500" />
              <path d="M8 9l7 1M13 8l2.500 2-2.500 2" stroke="#1ca03c" strokeWidth="1.500" />
              <path d="M8 9l-5 6M2 12v4h4" stroke="#d81c1c" strokeWidth="1.500" />
              <path d="M11 2h3l-3 3h3M12 13l1.500 2L15 13m-1.500 2v2M7 13l3 3m0-3l-3 3" stroke="#222" />
            </svg>
          </button>
          <button type="button" aria-label="Misura inerzia 2D" className="size-[18px] border border-t-white border-l-white border-r-[#555] border-b-[#555] bg-[#eee4d8]">
            <svg viewBox="0 0 18 18" fill="none">
              <path d="M2 3h3l.5 1.500V8H1V4.500z" fill="#6a5a1c" stroke="#222" strokeWidth=".8" />
              <path d="M9 15V3M7.500 5L9 2.500 10.500 5" stroke="#1ca03c" strokeWidth="1.300" />
              <path d="M6 10h9M13 8l2.500 2-2.500 2" stroke="#d81c1c" strokeWidth="1.300" />
              <path d="M13 13l3 3m0-3l-3 3M5 1l1.500 1.500L8 1" stroke="#222" />
            </svg>
          </button>
          <div className="flex flex-1">
            <Field label="Selezione:" value="Faccia...Prisma.1...Part1" labelClass="w-9" />
          </div>
        </div>
        <div className="pt-1">
          <Heading>Risultato</Heading>
        </div>
        <p className="mt-0.5 pl-px leading-[11px]">
          Modalità di calcolo:&nbsp; Esatta
          <br />
          Tipo:&nbsp; Superficie
        </p>
        <div className="mt-px flex">
          <fieldset className={"w-[176px] pr-px pb-0.5 " + frame}>
            <legend className="ml-1 px-0.5 leading-[10px]">Caratteristiche</legend>
            <div className="flex flex-col gap-px pt-0.5">
              <Field label="Area" value="3507.847mm2" labelClass="w-[98px] pl-0.5" />
              <Field label="Massa" value="0.035kg" labelClass="w-[98px] pl-0.5" />
              <Field label="Densità massa superficiale" value="10kg_m2" labelClass="w-[98px] pl-0.5" white />
            </div>
          </fieldset>
          <fieldset className={"w-[94px] pr-px pb-0.5 " + frame}>
            <legend className="ml-1 px-0.5 leading-[10px]">Baricentro (G)</legend>
            <div className="flex flex-col gap-px pt-0.5">
              <Field label="Gx" value="109.2mm" labelClass="w-[17px] pl-px" />
              <Field label="Gy" value="-13.65mm" labelClass="w-[17px] pl-px" />
              <Field label="Gz" value="27.5mm" labelClass="w-[17px] pl-px" />
            </div>
          </fieldset>
        </div>
        <div role="tablist" className="mt-1 flex pl-px">
          {tabs.map(([name, width], i) => (
            <button
              key={name}
              type="button"
              role="tab"
              aria-selected={tab === i}
              onClick={() => setTab(i)}
              className={
                "h-4 border-t border-t-[#fff6e8] border-r-2 border-r-[#6c6860] leading-none whitespace-nowrap " +
                width +
                (tab === i ? " text-[#1c1c24]" : " text-[#8c857a]")
              }
            >
              {name}
            </button>
          ))}
        </div>
        <div role="tabpanel" className="h-[136px] border-t border-r-2 border-b-2 border-l border-t-[#fff6e8] border-r-[#807868] border-b-[#3c3a34] border-l-[#fff6e8] pt-0.5 pr-0.5 pl-0.5">
          <fieldset className={"pr-px pb-0.5 " + frame}>
            <legend className="ml-1 px-0.5 leading-[10px]">Matrice di inerzia / G</legend>
            <div className="grid grid-cols-3 gap-y-px pt-0.5">
              <Field label="IoxG" value="1.482e-005kgxm2" labelClass="w-6 pl-px" />
              <Field label="IoyG" value="1.475e-005kgxm2" labelClass="w-6 pl-px" />
              <Field label="IozG" value="1.189e-005kgxm2" labelClass="w-6 pl-px" />
              <Field label="IxyG" value="-5.945e-006kgxm2" labelClass="w-6 pl-px" />
              <Field label="IxzG" value="0kgxm2" labelClass="w-6 pl-px" />
              <Field label="IyzG" value="0kgxm2" labelClass="w-6 pl-px" />
            </div>
          </fieldset>
          <fieldset className={"pr-px pb-0.5 " + frame}>
            <legend className="ml-1 px-0.5 leading-[10px]">Momenti principali / G</legend>
            <div className="grid grid-cols-3 pt-0.5">
              <Field label="M1" value="8.843e-006kgxm2" labelClass="w-5 pl-px" />
              <Field label="M2" value="1.189e-005kgxm2" labelClass="w-5 pl-px" />
              <Field label="M3" value="2.073e-005kgxm2" labelClass="w-5 pl-px" />
            </div>
          </fieldset>
        </div>
        <div className="mt-1 flex items-center">
          <label className="flex w-[75px] items-center gap-1">
            <input
              type="checkbox"
              defaultChecked
              className="size-[7px] appearance-none border border-[#8a6a3c] bg-[#fff6dc] checked:bg-linear-to-br checked:from-[#fbd08c] checked:to-[#c8701c]"
            />
            Conserva misura
          </label>
          <label className="flex w-20 items-center gap-0.5 whitespace-nowrap">
            <input type="checkbox" className="size-[7px] appearance-none border border-[#55554c] bg-[#fff6dc]" />
            solo body principali
          </label>
          <div className="flex flex-1 justify-end gap-0.5">
            <button type="button" className={"h-[15px] w-[61px] leading-none whitespace-nowrap " + raised}>Crea geometria</button>
            <button type="button" className={"h-[15px] w-[34px] leading-none " + raised}>Esporta</button>
            <button type="button" className={"h-[15px] w-14 leading-none " + raised}>Personalizza...</button>
          </div>
        </div>
        <label className="mt-1 flex items-center gap-1 leading-[12px] text-[#c4b49c]">
          <input type="checkbox" disabled className="size-[7px] appearance-none border border-[#8a8070]" />
          Mostra solo gli elementi visualizzati
        </label>
        <div className="mt-1.5 flex justify-end">
          <ActionButtons />
        </div>
      </div>
    </section>
  );
}

/* ---------- freehand red notes ---------- */

function Notes() {
  return (
    <svg
      viewBox="0 0 1200 614"
      className="pointer-events-none absolute top-0 left-0 h-[614px] w-[1200px]"
      fill="none"
      stroke="#da2222"
      strokeWidth="4"
      strokeLinecap="round"
      strokeLinejoin="round"
    >
      <path d="M537 496L549 482Q552 484 550 500L547 511Q543 518 545 524" />
      <path d="M510 563L524 564Q536 560 536 567Q534 582 530 592L527 605Q522 611 512 609Q504 606 507 601Q510 588 510 582Q515 570 526 565" />
      <path d="M537 566L540 565L570 544Q585 534 592 533Q620 523 642 520Q668 518 695 518Q720 516 760 519L798 520Q808 516 824 514L855 514" />
      <path d="M836 502Q853 506 856 514Q849 524 839 535" />
      <path d="M908 462Q915 455 921 454Q926 459 908 474Q912 479 922 474" />
      <path d="M888 508Q896 498 913 491Q925 488 942 491Q950 500 954 511Q961 523 957 533Q953 542 945 541Q925 540 900 536Q876 532 868 524Q863 512 872 505Q878 502 887 502" />
      <path d="M1035 476Q1040 467 1047 470Q1053 478 1039 485Q1048 487 1046 493Q1041 501 1029 501Q1018 502 1016 496" />
      <path d="M1058 499Q1048 496 1043 507Q1048 511 1058 500Q1072 492 1085 495Q1102 500 1104 511Q1105 524 1102 533Q1098 546 1086 546Q1065 549 1052 541Q1040 533 1040 519Q1041 506 1053 499" />
      <path d="M1072 493L1102 440Q1118 408 1127 390Q1136 374 1141 355Q1150 310 1148 260Q1145 215 1137 194Q1128 175 1110 160Q1095 146 1085 140Q1077 130 1062 119" />
      <path d="M1076 151Q1061 134 1052 120L1069 113Q1071 117 1062 120Q1056 122 1052 119" />
      <path d="M963 13Q961 27 958 32Q970 33 984 32M974 23Q972 35 969 43" />
      <path d="M831 36Q822 40 820 49Q820 63 828 73Q840 80 857 80Q873 77 878 64Q879 50 872 44Q860 39 846 41Q833 43 826 49" />
      <path d="M926 89Q908 88 909 84Q916 75 930 75Q948 80 960 79Q975 78 985 82Q976 86 968 88Q950 92 926 89" />
      <path d="M820 49Q805 41 780 38Q750 36 729 33Q690 24 669 25Q640 28 600 27Q560 25 529 25L440 25Q415 27 389 35Q350 41 335 46Q300 60 264 70L220 89Q203 98 200 102Q190 112 184 115Q170 124 166 132Q160 132 145 140Q120 147 72 150" />
      <path d="M131 126Q105 141 72 149Q95 154 123 160" />
      <path d="M538 209Q540 204 558 208M560 207Q540 212 532 223Q528 229 535 235Q550 245 566 251Q575 244 578 235Q583 222 578 210Q575 206 566 206Q552 207 546 205" />
    </svg>
  );
}

export default function App() {
  return (
    <main className="relative flex min-h-screen flex-col overflow-hidden bg-white font-['Lato',sans-serif]">
      <div className="relative min-h-[580px] flex-1 bg-linear-to-b from-[#333366] via-[#4a4776] via-62% to-[#a8a8bf]">
        <Part />
        <SpecificationTree />
        <Compass />
        <GeometryDialog />
        <InertiaDialog />
      </div>
      <div className="pb-[11px]">
        <Toolbar />
      </div>
      <Notes />
    </main>
  );
}
